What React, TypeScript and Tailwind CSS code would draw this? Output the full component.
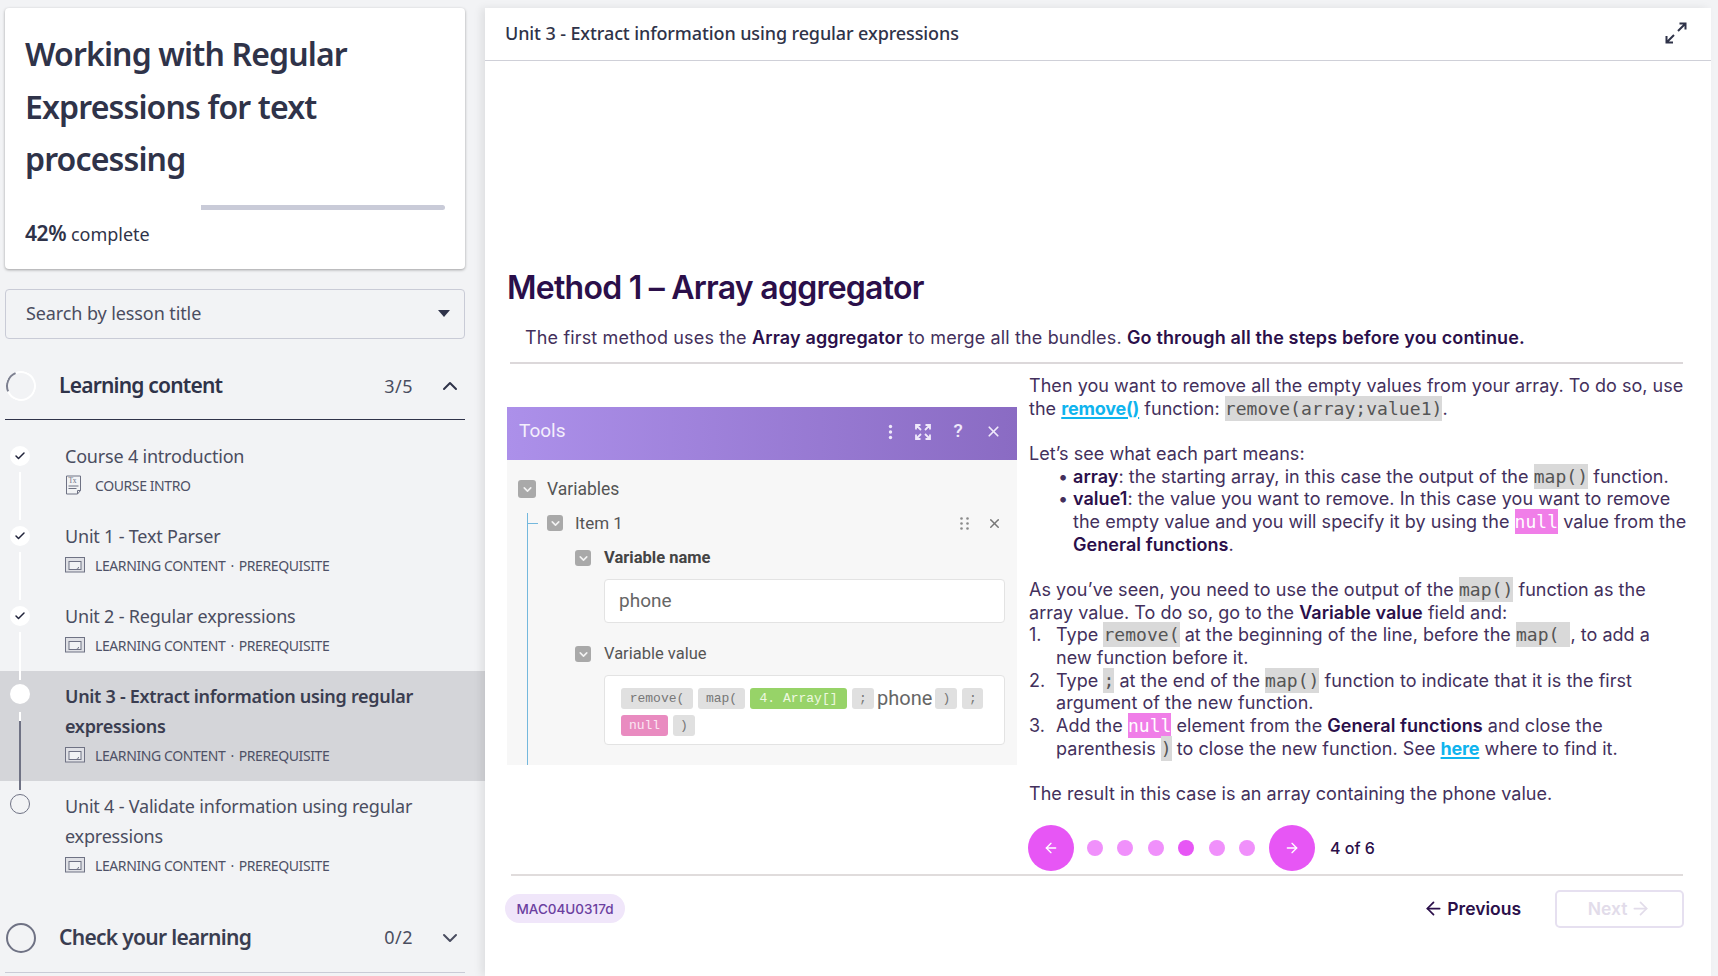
import { ArrowLeft, ArrowRight, Check, ChevronDown, ChevronUp, X } from "lucide-react";
import type { ReactNode } from "react";

type Lesson = {
  title: string;
  kind: "intro" | "content";
  done?: boolean;
  active?: boolean;
};

const lessons: Lesson[] = [
  { title: "Course 4 introduction", kind: "intro", done: true },
  { title: "Unit 1 - Text Parser", kind: "content", done: true },
  { title: "Unit 2 - Regular expressions", kind: "content", done: true },
  { title: "Unit 3 - Extract information using regular expressions", kind: "content", active: true },
  { title: "Unit 4 - Validate information using regular expressions", kind: "content" },
];

function DocIcon() {
  return (
    <svg width="18" height="20" viewBox="0 0 18 20" fill="none" stroke="#6f7284" strokeWidth="1">
      <path d="M1.5 1h14v14.5l-3 3.5h-11z" />
      <path d="M15.5 15.5h-3V19" />
      <text x="3.5" y="8" fontSize="7.5" fontFamily="Liberation Serif" fill="#6f7284" stroke="none">
        Tx
      </text>
      <path d="M3.5 11h10M3.5 13.5h8" />
    </svg>
  );
}

function SlideIcon() {
  return (
    <svg width="20" height="16" viewBox="0 0 20 16" fill="none" stroke="#6f7284" strokeWidth="1">
      <rect x="0.5" y="0.5" width="19" height="14.5" fill="#dfe0e5" />
      <rect x="4" y="4.5" width="12" height="8" fill="#f2f3f5" />
      <path d="M10.5 12.5c2 0 3-1 3-2.5" />
    </svg>
  );
}

function ExpandIcon() {
  return (
    <svg width="22" height="22" viewBox="0 0 22 22" fill="none" stroke="#2f3349" strokeWidth="2">
      <path d="M13 9l7-7M14.5 1.5h6v6" />
      <path d="M9 13l-7 7M1.5 14v6.5H8" />
    </svg>
  );
}

function Meta({ kind }: { kind: Lesson["kind"] }) {
  return (
    <div className="mt-[-1px] flex h-[30px] items-center text-[14px] tracking-[-0.4px] text-[#4e5166]">
      <span className="flex w-[30px] items-center">{kind === "intro" ? <DocIcon /> : <SlideIcon />}</span>
      {kind === "intro" ? (
        <span>COURSE INTRO</span>
      ) : (
        <span>
          LEARNING CONTENT<span className="mx-[5px]">·</span>PREREQUISITE
        </span>
      )}
    </div>
  );
}

function LessonRow({ lesson, last }: { lesson: Lesson; last: boolean }) {
  return (
    <div className={`flex pr-[60px] ${lesson.active ? "bg-[#d4d5d9]" : ""}`}>
      <div className={`relative z-10 ml-[10px] flex w-[20px] shrink-0 flex-col items-center ${lesson.done ? "pt-[15px]" : "pt-[13px]"}`}>
        {lesson.done ? (
          <span className="flex h-[20px] w-[20px] items-center justify-center rounded-full bg-white">
            <Check size={12} strokeWidth={3} color="#20233a" />
          </span>
        ) : lesson.active ? (
          <span className="h-[20px] w-[20px] rounded-full bg-white" />
        ) : (
          <span className="h-[20px] w-[20px] rounded-full border border-[#6f7284]" />
        )}
        {!last && lesson.active && (
          <span className="mt-[8px] mb-[-9px] flex w-[2px] flex-1 flex-col bg-[#6f7284]">
            <span className="h-[9px] bg-white" />
          </span>
        )}
        {!last && !lesson.active && <span className="mt-[6px] mb-[-9px] w-[2px] flex-1 bg-white" />}
      </div>
      <div className="ml-[35px] pb-[11px] pt-[10px]">
        <div
          className={`text-[18px] leading-[30px] ${
            lesson.active ? "font-semibold tracking-[-0.3px] text-[#3a3d50]" : "tracking-[-0.2px] text-[#4a4d60]"
          }`}
        >
          {lesson.title}
        </div>
        <Meta kind={lesson.kind} />
      </div>
    </div>
  );
}

function Code({ children }: { children: ReactNode }) {
  return <code className="bg-[#d9d9d9] py-[2px] font-['DejaVu_Sans_Mono',monospace] text-[18px] leading-[0] text-[#555]">{children}</code>;
}

function Null() {
  return <code className="bg-[#f07ee8] py-[2px] font-['DejaVu_Sans_Mono',monospace] text-[18px] leading-[0] text-white">null</code>;
}

function Link({ children }: { children: ReactNode }) {
  return <span className="font-bold tracking-[-0.2px] text-[#0fb4ee] underline decoration-2 underline-offset-2">{children}</span>;
}

function Bold({ children }: { children: ReactNode }) {
  return <b className="font-semibold text-[#2b0f4a]">{children}</b>;
}

function Chip({ text, tone = "grey", width }: { text: string; tone?: "grey" | "green" | "pink"; width: string }) {
  const tones = {
    grey: "bg-[#e0e0e0] text-[#777]",
    green: "bg-[#97d368] text-[#eef8e0]",
    pink: "bg-[#e98bc0] text-[#fbe6f2]",
  };
  return (
    <span className={`flex h-[21px] items-center justify-center rounded-[3px] font-['Liberation_Mono',monospace] text-[13px] ${tones[tone]} ${width}`}>
      {text}
    </span>
  );
}

function Toggle() {
  return (
    <span className="flex h-[16px] w-[16px] shrink-0 items-center justify-center rounded-[3px] bg-[#a9a9a9]">
      <ChevronDown size={13} strokeWidth={3} color="#f2f2f2" />
    </span>
  );
}

function ToolsPicture() {
  return (
    <div className="flex h-[358px] w-[510px] flex-col bg-[#f7f7f7] font-['Roboto',sans-serif] text-[#555]">
      <div className="flex h-[53px] shrink-0 items-center bg-gradient-to-r from-[#ac90ea] to-[#8a6bc3] pb-[4px] pl-[12px] pr-[15px] text-white">
        <span className="flex-1 text-[19px] text-[#f4effc]">Tools</span>
        <span className="flex items-center gap-[19px] text-[#efe9fa]">
          <svg width="5" height="16" viewBox="0 0 5 16" fill="currentColor">
            <circle cx="2.5" cy="2.5" r="1.7" />
            <circle cx="2.5" cy="8" r="1.7" />
            <circle cx="2.5" cy="13.5" r="1.7" />
          </svg>
          <svg width="16" height="16" viewBox="0 0 16 16" fill="none" stroke="currentColor" strokeWidth="1.8" className="ml-[3px]">
            <path d="M1 5.5V1h4.5M10.5 1H15v4.5M15 10.5V15h-4.5M5.5 15H1v-4.5M1.5 1.5l4.5 4.5M14.5 1.5L10 6M14.5 14.5L10 10M1.5 14.5L6 10" />
          </svg>
          <span className="w-[16px] text-center text-[19px] font-medium">?</span>
          <X size={17} strokeWidth={2.4} />
        </span>
      </div>
      <div className="flex items-center gap-[11px] pl-[11px] pt-[19px] text-[17.5px] leading-[20px]">
        <span className="flex h-[18px] w-[18px] items-center justify-center rounded-[3px] bg-[#a9a9a9]">
          <ChevronDown size={13} strokeWidth={3} color="#f2f2f2" />
        </span>
        Variables
      </div>
      <div className="ml-[20px] mt-[14px] flex-1 border-l border-[#74b8dd]">
        <div className="relative flex items-center gap-[12px] pl-[19px] pr-[15px] text-[17px] leading-[20px]">
          <span className="absolute left-0 top-[10px] h-px w-[10px] bg-[#74b8dd]" />
          <Toggle />
          <span className="flex-1">Item 1</span>
          <svg width="9" height="13" viewBox="0 0 9 13" fill="#8a8a8a" className="mr-[6px]">
            <circle cx="1.5" cy="1.5" r="1.3" />
            <circle cx="7.5" cy="1.5" r="1.3" />
            <circle cx="1.5" cy="6.5" r="1.3" />
            <circle cx="7.5" cy="6.5" r="1.3" />
            <circle cx="1.5" cy="11.5" r="1.3" />
            <circle cx="7.5" cy="11.5" r="1.3" />
          </svg>
          <X size={15} strokeWidth={2.4} color="#777" />
        </div>
        <div className="ml-[47px] mr-[12px]">
          <div className="mt-[15px] flex items-center gap-[13px] text-[16.5px] font-bold leading-[20px] text-[#444]">
            <Toggle />
            Variable name
          </div>
          <div className="ml-[29px] mt-[11px] flex h-[44px] items-center rounded-[4px] border border-[#e3e3e3] bg-white pl-[14px] text-[19px] text-[#666]">
            phone
          </div>
          <div className="mt-[21px] flex items-center gap-[13px] text-[16.5px] leading-[20px]">
            <Toggle />
            Variable value
          </div>
          <div className="ml-[29px] mt-[11px] flex h-[70px] flex-wrap content-start items-center gap-x-[5px] gap-y-[6px] rounded-[4px] border border-[#e3e3e3] bg-white pl-[16px] pt-[12px]">
            <Chip text="remove(" width="w-[72px]" />
            <Chip text="map(" width="w-[47px]" />
            <Chip text="4. Array[]" tone="green" width="w-[97px]" />
            <Chip text=";" width="w-[22px]" />
            <span className="mx-[-2px] text-[20px] leading-[21px] text-[#666]">phone</span>
            <Chip text=")" width="w-[22px]" />
            <Chip text=";" width="w-[21px]" />
            <Chip text="null" tone="pink" width="w-[47px]" />
            <Chip text=")" width="w-[22px]" />
          </div>
        </div>
      </div>
    </div>
  );
}

export default function App() {
  return (
    <div className="flex h-[976px] w-[1718px] overflow-hidden bg-[#f2f3f5] font-['Noto_Sans',sans-serif] text-[#2f3349]">
      <aside className="w-[485px] shrink-0">
        <div className="ml-[5px] mt-[8px] h-[261px] w-[460px] rounded-[4px] bg-white px-[20px] pt-[20px] shadow-[0_1px_3px_rgba(0,0,0,0.35)]">
          <h1 className="text-[32px] font-semibold leading-[52.5px] tracking-[-0.85px]">
            Working with Regular Expressions for text processing
          </h1>
          <div className="mt-[19px] h-[5px] w-[420px] rounded-full bg-white pl-[176px]">
            <div className="h-full rounded-r-full bg-[#c9cbd8]" />
          </div>
          <div className="mt-[9px] text-[18px] leading-[28px]">
            <span className="text-[21px] font-semibold tracking-[-0.4px]">42%</span> complete
          </div>
        </div>
        <div className="ml-[5px] mt-[20px] flex h-[50px] w-[460px] items-center rounded-[4px] border border-[#c9cbd6] pb-[2px] pl-[20px] pr-[14px] text-[18px] tracking-[-0.1px] text-[#4a4d60]">
          <span className="flex-1">Search by lesson title</span>
          <span className="h-0 w-0 border-x-[6px] border-t-[7px] border-x-transparent border-t-[#2f3349]" />
        </div>
        <div className="ml-[5px] mt-[30px] flex h-[51px] w-[460px] items-center border-b border-[#2f3349] pb-[16px]">
          <span className="ml-px h-[30px] w-[30px] rotate-[22deg] rounded-full border-2 border-white border-l-[#7d8090] bg-[#f2f3f5]" />
          <span className="ml-[23px] flex-1 text-[21px] font-semibold tracking-[-0.8px]">Learning content</span>
          <span className="mr-[25px] text-[18px] tracking-[0.5px] text-[#4a4d60]">3/5</span>
          <ChevronUp size={24} strokeWidth={2} className="mr-[3px]" />
        </div>
        <div className="mt-[11px]">
          {lessons.map((lesson, i) => (
            <LessonRow key={lesson.title} lesson={lesson} last={i === lessons.length - 1} />
          ))}
        </div>
        <div className="ml-[5px] mt-[22px] flex h-[60px] w-[460px] items-center border-b border-[#c9cbd6] pb-[10px]">
          <span className="ml-px h-[30px] w-[30px] rounded-full border-[2.5px] border-[#6f7284]" />
          <span className="ml-[23px] flex-1 text-[21px] font-semibold tracking-[-0.7px] text-[#3a3d50]">Check your learning</span>
          <span className="mr-[25px] text-[18px] tracking-[0.5px] text-[#4a4d60]">0/2</span>
          <ChevronDown size={24} strokeWidth={2} className="mr-[3px] text-[#4a4d60]" />
        </div>
      </aside>
      <main className="mr-[7px] mt-[8px] flex min-w-0 flex-1 flex-col bg-white font-['Inter',sans-serif] text-[#43305c] shadow-[-4px_0_8px_rgba(0,0,0,0.08)]">
        <div className="flex h-[53px] shrink-0 items-center justify-between border-b border-[#cfd0d8] pb-[2px] pl-[20px] pr-[24px] font-['Noto_Sans',sans-serif] text-[18px] font-medium tracking-[-0.11px] text-[#2f3349]">
          <span>Unit 3 - Extract information using regular expressions</span>
          <ExpandIcon />
        </div>
        <div className="pl-[22px] pr-[28px]">
          <h2 className="mt-[207px] text-[32px] font-semibold leading-[40px] tracking-[-0.75px] text-[#2b0f4a]">Method 1 – Array aggregator</h2>
          <p className="ml-[18px] mt-[18px] text-[18px] leading-[24px] tracking-[0.15px]">
            The first method uses the <Bold>Array aggregator</Bold> to merge all the bundles. <Bold>Go through all the steps before you continue.</Bold>
          </p>
          <div className="ml-[3px] mt-[12px] flex border-t-2 border-[#dcd8da]">
            <div className="ml-[-3px] w-[522px] shrink-0 pt-[43px]">
              <ToolsPicture />
            </div>
            <div className="w-[660px] shrink-0 pt-[11px]">
              <div className="text-[18px] leading-[22.67px] tracking-[0.04px]">
                <p className="mb-[22.67px]">
                  Then you want to remove all the empty values from your array. To do so, use the <Link>remove()</Link> function:{" "}
                  <Code>remove(array;value1)</Code>.
                </p>
                <p>Let’s see what each part means:</p>
                <ul className="mb-[22.67px]">
                  <li className="relative pl-[44px] before:absolute before:left-[29px] before:content-['•']">
                    <Bold>array</Bold>: the starting array, in this case the output of the <Code>map()</Code> function.
                  </li>
                  <li className="relative pl-[44px] before:absolute before:left-[29px] before:content-['•']">
                    <Bold>value1</Bold>: the value you want to remove. In this case you want to remove the empty value and you will specify it by using the <Null /> value from the{" "}
                    <Bold>General functions</Bold>.
                  </li>
                </ul>
                <p>
                  As you’ve seen, you need to use the output of the <Code>map()</Code> function as the array value. To do so, go to the <Bold>Variable value</Bold> field and:
                </p>
                <ol className="mb-[22.67px]">
                  <li className="relative pl-[27px] before:absolute before:left-0 before:content-['1.']">
                    Type <Code>remove(</Code> at the beginning of the line, before the <Code>map( </Code>, to add a new function before it.
                  </li>
                  <li className="relative pl-[27px] before:absolute before:left-0 before:content-['2.']">
                    Type <Code>;</Code> at the end of the <Code>map()</Code> function to indicate that it is the first argument of the new function.
                  </li>
                  <li className="relative pl-[27px] before:absolute before:left-0 before:content-['3.']">
                    Add the <Null /> element from the <Bold>General functions</Bold> and close the parenthesis <Code>)</Code> to close the new function. See <Link>here</Link> where to find it.
                  </li>
                </ol>
                <p>The result in this case is an array containing the phone value.</p>
              </div>
              <div className="ml-[-1px] mt-[19px] flex items-center">
                <span className="flex h-[46px] w-[46px] items-center justify-center rounded-full bg-[#e756f5]">
                  <ArrowLeft size={16} color="white" />
                </span>
                <span className="ml-[13px] flex gap-[14.4px]">
                  {[0, 1, 2, 3, 4, 5].map((i) => (
                    <span key={i} className={`h-[16px] w-[16px] rounded-full ${i === 3 ? "bg-[#e756f5]" : "bg-[#f090fb]"}`} />
                  ))}
                </span>
                <span className="ml-[14px] flex h-[46px] w-[46px] items-center justify-center rounded-full bg-[#e756f5]">
                  <ArrowRight size={16} color="white" />
                </span>
                <span className="ml-[15px] text-[16px] font-medium text-[#2b0f4a]">4 of 6</span>
              </div>
            </div>
          </div>
          <div className="ml-[4px] mt-[3px] h-[2px] bg-[#e0dcdc]" />
          <div className="ml-[-2px] mr-[-1px] mt-[14px] flex items-center">
            <span className="flex h-[29px] w-[120px] items-center justify-center rounded-full bg-[#f0e6fa] text-[13.5px] font-medium text-[#6b3fa0]">MAC04U0317d</span>
            <span className="ml-auto flex items-center gap-[3px] text-[17.5px] font-semibold text-[#2b0f4a]">
              <ArrowLeft size={21} strokeWidth={2} />
              Previous
            </span>
            <span className="ml-[34px] flex h-[38px] w-[129px] items-center justify-center gap-[3px] rounded-[5px] border-2 border-[#e6e0f0] text-[17.5px] font-semibold text-[#e2dcea]">
              Next
              <ArrowRight size={21} strokeWidth={2} />
            </span>
          </div>
        </div>
      </main>
    </div>
  );
}
